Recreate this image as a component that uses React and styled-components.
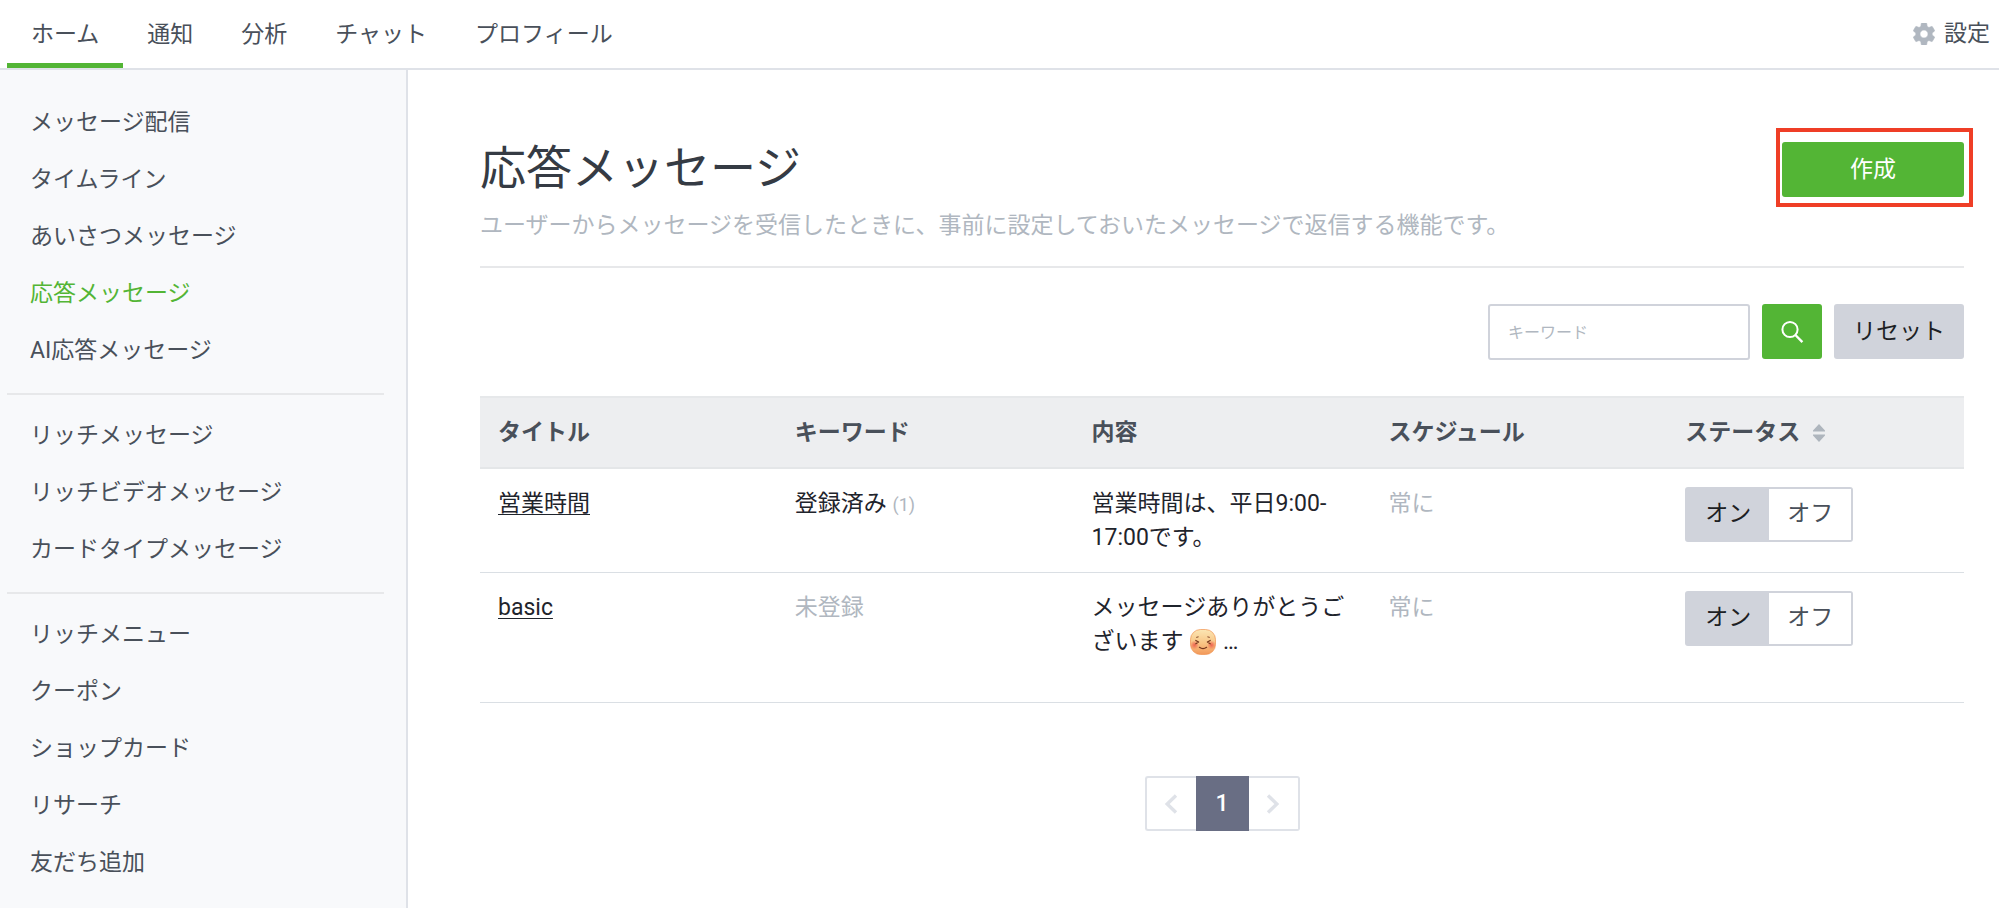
import React, { useState } from "react";
import styled, { createGlobalStyle, css } from "styled-components";

const color = {
  green: "#53b535",
  heading: "#353b44",
  text: "#1f242c",
  nav: "#49505a",
  muted: "#b0b7c0",
  line: "#dfe2e8",
  rule: "#e7e8ea",
  control: "#d0d3db",
  pager: "#696e84",
};

const GlobalStyle = createGlobalStyle`
  *, *::before, *::after { box-sizing: border-box; }
  body {
    margin: 0;
    background: #fff;
    color: ${color.text};
    font-family: Roboto, "Noto Sans CJK JP", sans-serif;
    font-size: 23px;
    line-height: 34px;
  }
  button, input { font: inherit; color: inherit; margin: 0; }
  button { cursor: pointer; padding: 0; border: 0; background: none; }
  a { color: inherit; }
`;

const Page = styled.div`
  display: flex;
  flex-direction: column;
  min-height: 100vh;
`;

const Header = styled.header`
  display: flex;
  justify-content: space-between;
  height: 70px;
  padding: 0 9px 0 7px;
  border-bottom: 2px solid ${color.line};
  color: ${color.nav};
`;

const Tabs = styled.nav`
  display: flex;
`;

const Tab = styled.a`
  display: flex;
  align-items: center;
  padding: 6px 24px 0;
  border-bottom: 5px solid ${(p) => (p.$active ? color.green : "transparent")};
  text-decoration: none;
`;

const Settings = styled.a`
  display: flex;
  align-items: center;
  gap: 9px;
  text-decoration: none;
`;

const Body = styled.div`
  display: flex;
  flex: 1;
`;

const Sidebar = styled.nav`
  flex: 0 0 408px;
  padding: 24px 22px 16px 7px;
  border-right: 2px solid ${color.line};
  background: #f8f9fb;
  color: ${color.nav};
`;

const MenuGroup = styled.ul`
  margin: 0;
  padding: 0;
  list-style: none;

  & + & {
    margin-top: 14px;
    padding-top: 12px;
    border-top: 2px solid ${color.rule};
  }
`;

const MenuLink = styled.a`
  display: flex;
  align-items: center;
  height: 57px;
  padding-left: 23px;
  text-decoration: none;
  ${(p) => p.$active && css`color: ${color.green};`}
`;

const Main = styled.main`
  flex: 1;
  min-width: 0;
  padding: 58px 35px 48px 72px;
`;

const PageHead = styled.div`
  display: flex;
  justify-content: space-between;
  align-items: flex-start;
  padding-bottom: 23px;
  border-bottom: 2px solid ${color.rule};
`;

const Title = styled.h1`
  margin: 5px 0 6px;
  color: ${color.heading};
  font-size: 46px;
  font-weight: 400;
  line-height: 70px;
`;

const Lead = styled.p`
  margin: 0;
  color: ${color.muted};
`;

const CreateWrap = styled.div`
  position: relative;
  margin-top: 14px;
`;

const CreateButton = styled.button`
  display: block;
  width: 182px;
  height: 55px;
  border-radius: 3px;
  background: ${color.green};
  color: #fff;
`;

const Marker = styled.span`
  position: absolute;
  inset: -14px -9px -10px -6px;
  border: 4px solid #ef3e26;
  pointer-events: none;
`;

const SearchForm = styled.form`
  display: flex;
  justify-content: flex-end;
  align-items: flex-start;
  gap: 12px;
  margin: 36px 0;
`;

const KeywordInput = styled.input`
  width: 262px;
  height: 56px;
  padding: 0 18px;
  border: 2px solid ${color.control};
  border-radius: 3px;
  background: #fff;
  font-size: 16px;

  &::placeholder { color: ${color.muted}; opacity: 1; }
`;

const FormButton = styled.button`
  display: flex;
  align-items: center;
  justify-content: center;
  width: ${(p) => (p.$primary ? 60 : 130)}px;
  height: 55px;
  border-radius: 3px;
  background: ${(p) => (p.$primary ? color.green : color.control)};
  color: ${(p) => (p.$primary ? "#fff" : "#1d1f24")};
`;

const Table = styled.table`
  width: 100%;
  table-layout: fixed;
  border-collapse: separate;
  border-spacing: 0;
`;

const Th = styled.th`
  height: 73px;
  padding: 0 18px;
  border-top: 2px solid #e6e8ea;
  border-bottom: 2px solid #e4e6e8;
  background: #edeef0;
  color: ${color.nav};
  font-weight: 700;
  text-align: left;
`;

const SortButton = styled.button`
  display: flex;
  align-items: center;
  gap: 12px;
  font-weight: 700;
`;

const Row = styled.tr`
  height: ${(p) => (p.$tall ? 130 : 104)}px;
`;

const Td = styled.td`
  padding: 18px 18px 17px;
  border-bottom: 1px solid #dadfe4;
  vertical-align: top;
  ${(p) => p.$muted && css`color: ${color.muted};`}
`;

const Count = styled.span`
  color: ${color.muted};
  font-size: 18px;
`;

const TitleLink = styled.a`
  text-decoration: underline;
  text-decoration-thickness: 1px;
  text-underline-offset: 3px;
`;

const Emoji = styled.svg`
  width: 26px;
  height: 26px;
  margin: 0 1px;
  vertical-align: -6px;
`;

const Toggle = styled.div`
  display: inline-flex;
  border: 2px solid ${color.control};
  border-radius: 3px;
  vertical-align: top;
`;

const ToggleButton = styled.button`
  width: 82px;
  height: 51px;
  padding-bottom: 2px;
  background: ${(p) => (p.$on ? color.control : "#fff")};
  color: ${(p) => (p.$on ? "#1d1f24" : color.nav)};
`;

const Pager = styled.nav`
  display: flex;
  justify-content: center;
  margin-top: 73px;
`;

const PagerButton = styled.button`
  display: flex;
  align-items: center;
  justify-content: center;
  width: ${(p) => (p.$current ? 53 : 51)}px;
  height: 55px;
  border: 2px solid ${(p) => (p.$current ? color.pager : color.line)};
  background: ${(p) => (p.$current ? color.pager : "#fff")};
  color: ${(p) => (p.$current ? "#fff" : color.line)};
  font-weight: ${(p) => (p.$current ? 500 : 400)};

  &:first-child { border-right: 0; border-radius: 3px 0 0 3px; }
  &:last-child { border-left: 0; border-radius: 0 3px 3px 0; }
`;

function GearIcon() {
  return (
    <svg width="22" height="22" viewBox="2.3 2.3 19.4 19.4" fill={color.muted} aria-hidden="true">
      <path
        fillRule="evenodd"
        stroke={color.muted}
        strokeWidth="0.6"
        strokeLinejoin="round"
        d="M19.14 12.94c.04-.3.06-.61.06-.94 0-.32-.02-.64-.07-.94l2.03-1.58c.18-.14.23-.41.12-.61l-1.92-3.32c-.12-.22-.37-.29-.59-.22l-2.39.96c-.5-.38-1.03-.7-1.62-.94l-.36-2.54c-.04-.24-.24-.41-.48-.41h-3.84c-.24 0-.43.17-.47.41l-.36 2.54c-.59.24-1.13.57-1.62.94l-2.39-.96c-.22-.08-.47 0-.59.22L2.74 8.87c-.12.21-.08.47.12.61l2.03 1.58c-.05.3-.09.63-.09.94s.02.64.07.94l-2.03 1.58c-.18.14-.23.41-.12.61l1.92 3.32c.12.22.37.29.59.22l2.39-.96c.5.38 1.03.7 1.62.94l.36 2.54c.05.24.24.41.48.41h3.84c.24 0 .44-.17.47-.41l.36-2.54c.59-.24 1.13-.56 1.62-.94l2.39.96c.22.08.47 0 .59-.22l1.92-3.32c.12-.22.07-.47-.12-.61l-2.01-1.58zM12 15.6c-1.98 0-3.6-1.62-3.6-3.6s1.62-3.6 3.6-3.6 3.6 1.62 3.6 3.6-1.62 3.6-3.6 3.6z"
      />
    </svg>
  );
}

function SearchIcon() {
  return (
    <svg width="24" height="24" viewBox="0 0 24 24" fill="none" stroke="#fff" strokeWidth="2" aria-hidden="true">
      <circle cx="10" cy="9.5" r="7.6" />
      <path d="M15.4 15l7 7.2" strokeWidth="2.4" />
    </svg>
  );
}

function SortIcon() {
  return (
    <svg width="14" height="20" viewBox="0 0 14 20" fill="#aeb5bd" aria-hidden="true">
      <path d="M7 1l6 6.4v1H1v-1zM7 19l6-6.4v-1H1v1z" />
    </svg>
  );
}

function Chevron({ flip }) {
  return (
    <svg width="14" height="20" viewBox="0 0 14 20" fill="none" stroke="currentColor" strokeWidth="3.4" aria-hidden="true">
      <path d={flip ? "M2 1.5L10.8 10L2 18.5" : "M12 1.5L3.2 10L12 18.5"} />
    </svg>
  );
}

function BlushFace() {
  return (
    <Emoji viewBox="0 0 26 26" role="img" aria-label="笑顔">
      <defs>
        <linearGradient id="skin" x1="0" y1="0" x2="0" y2="1">
          <stop offset="0" stopColor="#fbe6b4" />
          <stop offset="0.55" stopColor="#f8c585" />
          <stop offset="1" stopColor="#f2985a" />
        </linearGradient>
        <radialGradient id="cheek">
          <stop offset="0" stopColor="#ee6350" />
          <stop offset="1" stopColor="#ee6350" stopOpacity="0" />
        </radialGradient>
      </defs>
      <rect x="0.5" y="0.5" width="25" height="25" rx="10" fill="url(#skin)" stroke="#f1924f" strokeWidth="0.7" />
      <circle cx="4.5" cy="16" r="4.5" fill="url(#cheek)" />
      <circle cx="21.5" cy="16" r="4.5" fill="url(#cheek)" />
      <g fill="none" stroke="#74351d" strokeWidth="1.2" strokeLinecap="round" strokeLinejoin="round">
        <path d="M5.8 11.4l2.8 1.7-2.8 1.7M20.2 11.4l-2.8 1.7 2.8 1.7" />
        <path d="M9.4 18.3q3.6 2.7 7.2 0" />
        <path d="M6.6 8.3l1.6-.4M19.4 8.3l-1.6-.4" strokeWidth="0.9" />
      </g>
    </Emoji>
  );
}

const tabs = ["ホーム", "通知", "分析", "チャット", "プロフィール"];

const menu = [
  ["メッセージ配信", "タイムライン", "あいさつメッセージ", "応答メッセージ", "AI応答メッセージ"],
  ["リッチメッセージ", "リッチビデオメッセージ", "カードタイプメッセージ"],
  ["リッチメニュー", "クーポン", "ショップカード", "リサーチ", "友だち追加"],
];

function StatusToggle() {
  const [on, setOn] = useState(true);
  return (
    <Toggle role="group" aria-label="ステータス">
      <ToggleButton type="button" $on={on} aria-pressed={on} onClick={() => setOn(true)}>オン</ToggleButton>
      <ToggleButton type="button" $on={!on} aria-pressed={!on} onClick={() => setOn(false)}>オフ</ToggleButton>
    </Toggle>
  );
}

export default function App() {
  return (
    <Page>
      <GlobalStyle />
      <Header>
        <Tabs>
          {tabs.map((name, i) => (
            <Tab key={name} href="#" $active={i === 0}>{name}</Tab>
          ))}
        </Tabs>
        <Settings href="#"><GearIcon />設定</Settings>
      </Header>
      <Body>
        <Sidebar>
          {menu.map((group) => (
            <MenuGroup key={group[0]}>
              {group.map((name) => (
                <li key={name}>
                  <MenuLink href="#" $active={name === "応答メッセージ"}>{name}</MenuLink>
                </li>
              ))}
            </MenuGroup>
          ))}
        </Sidebar>
        <Main>
          <PageHead>
            <div>
              <Title>応答メッセージ</Title>
              <Lead>ユーザーからメッセージを受信したときに、事前に設定しておいたメッセージで返信する機能です。</Lead>
            </div>
            <CreateWrap>
              <CreateButton type="button">作成</CreateButton>
              <Marker />
            </CreateWrap>
          </PageHead>
          <SearchForm onSubmit={(e) => e.preventDefault()}>
            <KeywordInput type="text" placeholder="キーワード" aria-label="キーワード" />
            <FormButton type="submit" $primary aria-label="検索"><SearchIcon /></FormButton>
            <FormButton type="reset">リセット</FormButton>
          </SearchForm>
          <Table>
            <thead>
              <tr>
                <Th>タイトル</Th>
                <Th>キーワード</Th>
                <Th>内容</Th>
                <Th>スケジュール</Th>
                <Th><SortButton type="button">ステータス<SortIcon /></SortButton></Th>
              </tr>
            </thead>
            <tbody>
              <Row>
                <Td><TitleLink href="#">営業時間</TitleLink></Td>
                <Td>登録済み <Count>(1)</Count></Td>
                <Td>営業時間は、平日9:00-<wbr />17:00です。</Td>
                <Td $muted>常に</Td>
                <Td><StatusToggle /></Td>
              </Row>
              <Row $tall>
                <Td><TitleLink href="#">basic</TitleLink></Td>
                <Td $muted>未登録</Td>
                <Td>メッセージありがとうございます <BlushFace /> …</Td>
                <Td $muted>常に</Td>
                <Td><StatusToggle /></Td>
              </Row>
            </tbody>
          </Table>
          <Pager aria-label="ページ">
            <PagerButton type="button" aria-label="前へ"><Chevron /></PagerButton>
            <PagerButton type="button" $current aria-current="page">1</PagerButton>
            <PagerButton type="button" aria-label="次へ"><Chevron flip /></PagerButton>
          </Pager>
        </Main>
      </Body>
    </Page>
  );
}
